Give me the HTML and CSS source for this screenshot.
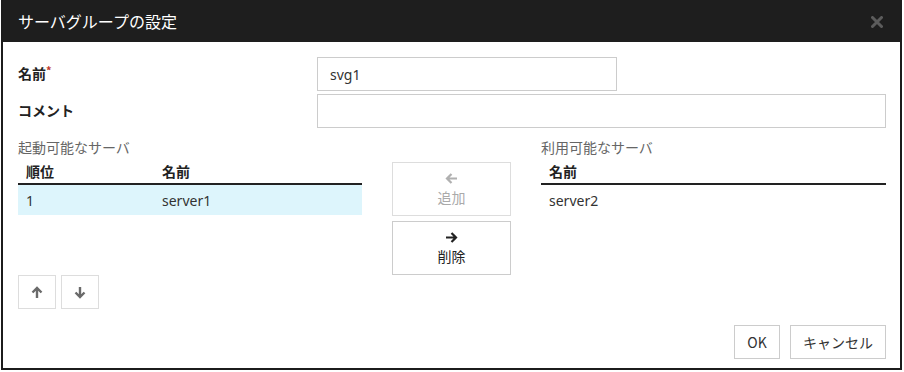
FILE: index.html
```html
<!DOCTYPE html>
<html lang="ja">
<head>
  <meta charset="UTF-8" />
  <title>サーバグループの設定</title>
  <link rel="stylesheet" href="styles.css">
</head>
<body>
  <div class="dialog">
    <div class="dialog-header">
      <h1>サーバグループの設定</h1>
      <button class="close" aria-label="閉じる">
        <svg width="12" height="12" viewBox="0 0 12 12"><path d="M1.5 1.5 L10.5 10.5 M10.5 1.5 L1.5 10.5" stroke="#5c5c5c" stroke-width="3" stroke-linecap="round"/></svg>
      </button>
    </div>

    <div class="dialog-body">
      <div class="form-row">
        <label for="name">名前<span class="req">*</span></label>
        <input type="text" id="name" class="input-name" value="svg1" />
      </div>
      <div class="form-row">
        <label for="comment">コメント</label>
        <input type="text" id="comment" class="input-comment" />
      </div>

      <div class="lists">
        <div class="list-col">
          <div class="caption">起動可能なサーバ</div>
          <div class="list-box">
            <table class="list">
              <thead>
                <tr><th class="col-order">順位</th><th>名前</th></tr>
              </thead>
              <tbody>
                <tr class="selected"><td>1</td><td>server1</td></tr>
              </tbody>
            </table>
          </div>
          <div class="order-buttons">
            <button class="icon-btn" aria-label="上へ">
              <svg width="12" height="13" viewBox="0 0 12 13"><path d="M6 12 V2 M1.5 6.5 L6 2 L10.5 6.5" fill="none" stroke="#6a6a6a" stroke-width="2.4"/></svg>
            </button>
            <button class="icon-btn" aria-label="下へ">
              <svg width="12" height="13" viewBox="0 0 12 13"><path d="M6 1 V11 M1.5 6.5 L6 11 L10.5 6.5" fill="none" stroke="#6a6a6a" stroke-width="2.4"/></svg>
            </button>
          </div>
        </div>

        <div class="move-buttons">
          <button class="move-btn" disabled>
            <svg width="13" height="11" viewBox="0 0 13 11"><path d="M12 5.5 H2 M6.5 1 L2 5.5 L6.5 10" fill="none" stroke="#b0b0b0" stroke-width="2.2"/></svg>
            <span>追加</span>
          </button>
          <button class="move-btn">
            <svg width="13" height="11" viewBox="0 0 13 11"><path d="M1 5.5 H11 M6.5 1 L11 5.5 L6.5 10" fill="none" stroke="#222" stroke-width="2.2"/></svg>
            <span>削除</span>
          </button>
        </div>

        <div class="list-col">
          <div class="caption">利用可能なサーバ</div>
          <div class="list-box">
            <table class="list">
              <thead>
                <tr><th>名前</th></tr>
              </thead>
              <tbody>
                <tr><td>server2</td></tr>
              </tbody>
            </table>
          </div>
        </div>
      </div>
    </div>

    <div class="dialog-footer">
      <button class="btn btn-ok">OK</button>
      <button class="btn btn-cancel">キャンセル</button>
    </div>
  </div>
</body>
</html>
```

FILE: styles.css
```css
* {
  margin: 0;
  padding: 0;
  box-sizing: border-box;
}

body {
  background: #fff;
  font-family: "Noto Sans", "Noto Sans CJK JP", sans-serif;
  font-size: 14px;
  color: #333;
}

button, input {
  font-family: inherit;
  font-size: 14px;
}

.dialog {
  margin-left: 1px;
  width: 901px;
  height: 370px;
  border: 2px solid #1c1c1c;
  border-top: none;
  display: flex;
  flex-direction: column;
  background: #fff;
}

.dialog-header {
  height: 42px;
  background: #1e1e1e;
  display: flex;
  align-items: center;
  justify-content: space-between;
  padding: 0 17px 0 15px;
}

.dialog-header h1 {
  font-family: "Noto Sans CJK JP", sans-serif;
  font-size: 16px;
  font-weight: normal;
  color: #fff;
  line-height: 20px;
}

.close {
  background: none;
  border: none;
  width: 12px;
  height: 12px;
  display: flex;
  margin-top: 1px;
}

.dialog-body {
  padding: 15px 14px 0 15px;
}

.form-row {
  display: grid;
  grid-template-columns: 299px 1fr;
  align-items: center;
  margin-bottom: 3px;
}

.form-row label {
  font-family: "Noto Sans CJK JP", sans-serif;
  font-weight: bold;
  color: #222;
  line-height: 20px;
  margin-top: -2px;
}

.req {
  color: #c0392b;
  font-size: 11px;
  vertical-align: top;
  position: relative;
  top: -3px;
}

.form-row input {
  height: 34px;
  border: 1px solid #ccc;
  padding: 0 12px;
  color: #333;
  outline: none;
}

.input-name {
  width: 300px;
}

.input-comment {
  width: 569px;
}

.lists {
  display: grid;
  grid-template-columns: 344px 119px 345px;
  column-gap: 30px;
  margin-top: 9px;
}

.caption {
  font-family: "Noto Sans CJK JP", sans-serif;
  color: #666;
  line-height: 20px;
}

.list-box {
  height: 118px;
}

.list {
  width: 100%;
  border-collapse: collapse;
}

.list th {
  font-family: "Noto Sans CJK JP", sans-serif;
  text-align: left;
  font-weight: bold;
  color: #222;
  height: 27px;
  padding: 2px 8px 0;
  border-bottom: 2px solid #222;
}

.list .col-order {
  width: 136px;
}

.list td {
  height: 31px;
  padding: 0 8px;
  color: #333;
}

.list tr.selected td {
  background: #ddf5fc;
}

.order-buttons {
  display: flex;
  gap: 5px;
}

.icon-btn {
  width: 38px;
  height: 34px;
  background: #fff;
  border: 1px solid #ddd;
  display: flex;
  align-items: center;
  justify-content: center;
}

.move-buttons {
  padding-top: 25px;
  display: flex;
  flex-direction: column;
  gap: 5px;
}

.move-btn {
  width: 119px;
  height: 54px;
  background: #fff;
  border: 1px solid #ccc;
  display: flex;
  flex-direction: column;
  align-items: center;
  justify-content: center;
  gap: 4px;
  color: #222;
  font-family: "Noto Sans CJK JP", sans-serif;
  line-height: 18px;
}

.move-btn:disabled {
  border-color: #ddd;
  color: #aaa;
}

.dialog-footer {
  margin-top: auto;
  display: flex;
  justify-content: flex-end;
  gap: 10px;
  padding: 0 14px 9px 0;
}

.btn {
  height: 34px;
  background: #fff;
  border: 1px solid #ccc;
  color: #333;
  font-family: "Noto Sans CJK JP", sans-serif;
}

.btn-ok {
  width: 46px;
}

.btn-cancel {
  width: 96px;
}
```
